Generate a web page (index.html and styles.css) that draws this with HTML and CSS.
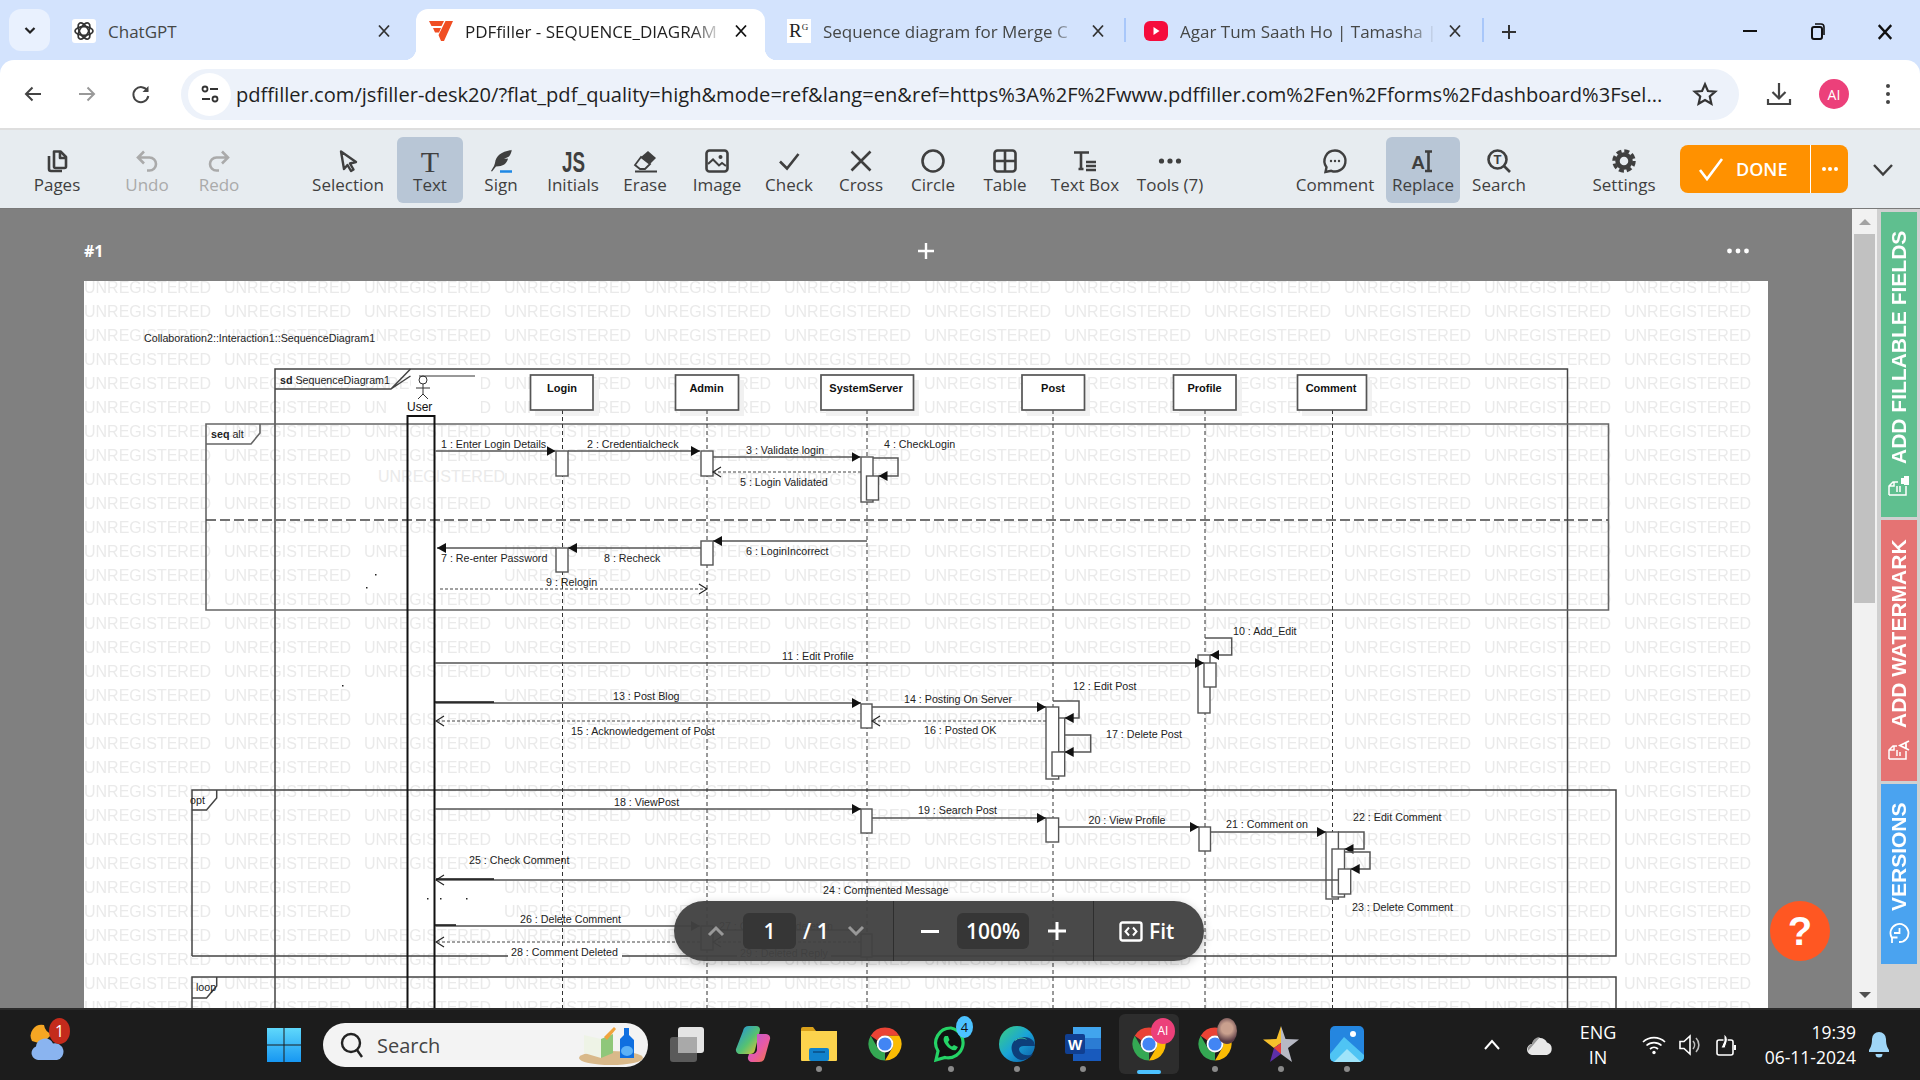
FILE: index.html
```html
<!DOCTYPE html>
<html lang="en">
<head>
    <meta charset="UTF-8">
    <meta name="viewport" content="width=device-width, initial-scale=1.0">
    <title>PDFfiller - SEQUENCE_DIAGRAM</title>
    <link rel="stylesheet" href="styles.css">
</head>
<body>

<svg class="defs" aria-hidden="true">
    <symbol id="chrome" viewBox="0 0 24 24">
        <path fill="#ea4335" d="M12 1a11 11 0 0 1 9.53 5.5H12a5.5 5.5 0 0 0-5 3.2L2.47 6.5A11 11 0 0 1 12 1z"/>
        <path fill="#fbbc04" d="M21.53 6.5A11 11 0 0 1 12 23l4.76-8.25A5.5 5.5 0 0 0 12 6.5z"/>
        <path fill="#34a853" d="M12 23A11 11 0 0 1 2.47 6.5l4.77 8.25a5.5 5.5 0 0 0 4.76 2.75z"/>
        <circle cx="12" cy="12" r="5.6" fill="#fff"/>
        <circle cx="12" cy="12" r="4.4" fill="#4285f4"/>
    </symbol>
    <symbol id="close" viewBox="0 0 16 16">
        <path d="M3 2.5l10 11M13 2.5l-10 11" fill="none" stroke="currentColor" stroke-width="1.8"/>
    </symbol>
</svg>

<div class="tabbar">
    <div class="tab-search">
        <svg width="14" height="14" viewBox="0 0 14 14"><path d="M2.5 5l4.5 4.5L11.5 5" fill="none" stroke="#222" stroke-width="2.2"/></svg>
    </div>
    <div class="tab tab-first">
        <svg class="favicon" viewBox="0 0 24 24"><rect width="24" height="24" rx="3" fill="#fff"/><g fill="none" stroke="#333" stroke-width="1.7"><ellipse cx="12" cy="12" rx="9" ry="4.4"/><ellipse cx="12" cy="12" rx="9" ry="4.4" transform="rotate(60 12 12)"/><ellipse cx="12" cy="12" rx="9" ry="4.4" transform="rotate(120 12 12)"/></g></svg>
        <span class="tab-title">ChatGPT</span>
        <svg class="tab-x"><use href="#close"/></svg>
    </div>
    <div class="tab tab-active">
        <svg class="favicon" viewBox="0 0 24 24"><path fill="#f04e23" d="M0 2h15l-2.5 5H2.5zM4 9h8l-2 4.5H6zM16.5 2H24l-9 20h-3l-2.5-6z"/></svg>
        <span class="tab-title tab-fade">PDFfiller - SEQUENCE_DIAGRAM</span>
        <svg class="tab-x"><use href="#close"/></svg>
    </div>
    <div class="tab tab-third">
        <span class="favicon favicon-r">R<sup>G</sup></span>
        <span class="tab-title tab-fade">Sequence diagram for Merge C</span>
        <svg class="tab-x"><use href="#close"/></svg>
    </div>
    <div class="tab tab-fourth">
        <svg class="favicon" viewBox="0 0 24 24"><rect y="2" width="24" height="20" rx="6" fill="#f50c3c"/><path d="M9.5 8l6 4-6 4z" fill="#fff"/></svg>
        <span class="tab-title tab-fade">Agar Tum Saath Ho | Tamasha |</span>
        <svg class="tab-x"><use href="#close"/></svg>
    </div>
    <svg class="tab-plus" width="18" height="18" viewBox="0 0 18 18"><path d="M9 2v14M2 9h14" stroke="#333" stroke-width="2"/></svg>
    <div class="window-btns">
        <svg width="18" height="18" viewBox="0 0 18 18"><path d="M2 9h14" stroke="#111" stroke-width="2"/></svg>
        <svg width="18" height="18" viewBox="0 0 18 18"><rect x="4" y="5" width="10" height="12" rx="2" fill="none" stroke="#111" stroke-width="2"/><path d="M7 2h6a3 3 0 0 1 3 3v8" fill="none" stroke="#111" stroke-width="1.6"/></svg>
        <svg width="20" height="20"><use href="#close" color="#111"/></svg>
    </div>
</div>

<div class="addressbar">
    <svg class="nav-icon" viewBox="0 0 24 24"><path d="M20 12H5M11.5 5.5L5 12l6.5 6.5" fill="none" stroke="#444" stroke-width="2"/></svg>
    <svg class="nav-icon" viewBox="0 0 24 24"><path d="M4 12h15M12.5 5.5L19 12l-6.5 6.5" fill="none" stroke="#999" stroke-width="2"/></svg>
    <svg class="nav-icon" viewBox="0 0 24 24"><path d="M18.5 9a7.5 7.5 0 1 0 .8 5" fill="none" stroke="#444" stroke-width="2"/><path d="M19.5 4v6h-6z" fill="#444"/></svg>
    <div class="omnibox">
        <span class="site-info">
            <svg width="20" height="22" viewBox="0 0 20 22"><g fill="none" stroke="#333" stroke-width="1.8"><circle cx="5" cy="6" r="2.5"/><path d="M10 6h8M2 16h8"/><circle cx="15" cy="16" r="2.5"/></g></svg>
        </span>
        <span class="url">pdffiller.com/jsfiller-desk20/?flat_pdf_quality=high&amp;mode=ref&amp;lang=en&amp;ref=https%3A%2F%2Fwww.pdffiller.com%2Fen%2Fforms%2Fdashboard%3Fsel...</span>
        <svg class="star" viewBox="0 0 24 24"><path d="M12 3l2.7 6.200 6.800.6-5.100 4.500 1.500 6.700L12 17.500 6.100 21l1.500-6.700L2.500 9.800l6.800-.6z" fill="none" stroke="#333" stroke-width="2"/></svg>
    </div>
    <svg class="download" viewBox="0 0 28 28"><path d="M14 3v15M7.5 12l6.500 6.500 6.500-6.500M3 19v5h22v-5" fill="none" stroke="#444" stroke-width="2.2"/></svg>
    <span class="avatar">AI</span>
    <svg class="kebab" width="6" height="24" viewBox="0 0 6 24"><circle cx="3" cy="4" r="2" fill="#444"/><circle cx="3" cy="12" r="2" fill="#444"/><circle cx="3" cy="20" r="2" fill="#444"/></svg>
</div>

<div class="toolbar">
    <div class="tool tool-first">
        <svg class="tool-icon" viewBox="0 0 24 24"><g fill="none" stroke="#3f3f3f" stroke-width="2.6" stroke-linejoin="round"><path d="M9 2.5h6.500L21 8v9.500a1.500 1.500 0 0 1-1.500 1.500H10.500A1.500 1.500 0 0 1 9 17.500z"/><path d="M15 2.500V9h6"/><path d="M4 7v13a2 2 0 0 0 2 2h11"/></g></svg>
        <span>Pages</span>
    </div>
    <div class="tool tool-off tool-undo">
        <svg class="tool-icon" viewBox="0 0 24 24"><path d="M9 2.500L3 8.500l6 6M3 8.500h11.500a6.500 6.500 0 0 1 0 13H12" fill="none" stroke="#aaa" stroke-width="2.6"/></svg>
        <span>Undo</span>
    </div>
    <div class="tool tool-off">
        <svg class="tool-icon" viewBox="0 0 24 24"><path d="M15 2.500l6 6-6 6M21 8.500H9.500a6.500 6.500 0 0 0 0 13H12" fill="none" stroke="#aaa" stroke-width="2.6"/></svg>
        <span>Redo</span>
    </div>
    <div class="tool tool-selection">
        <svg class="tool-icon" viewBox="0 0 24 24"><path d="M5 2.500l15 10.500-6 1.500 3.500 6-2.500 1.500-3.500-6L8 20z" fill="none" stroke="#3f3f3f" stroke-width="2.4" stroke-linejoin="round"/></svg>
        <span>Selection</span>
    </div>
    <div class="tool tool-on tool-text">
        <svg class="tool-icon" viewBox="0 0 24 24"><text x="12" y="23" class="glyph-serif">T</text></svg>
        <span>Text</span>
    </div>
    <div class="tool tool-sign">
        <svg class="tool-icon" viewBox="0 0 24 24"><path d="M23 1C14 2 7 6 6 14l-1 3-3 5 1 .5 4-5c7 0 11-3 12-8l-4 .5 5-2.500c1.500-2 2.500-4.500 3-7z" fill="#3f3f3f"/><path d="M11 22.500h12" stroke="#1e88e5" stroke-width="2.5"/></svg>
        <span>Sign</span>
    </div>
    <div class="tool">
        <svg class="tool-icon" viewBox="0 0 24 24"><text x="1" y="23" class="glyph-cond" textLength="23" lengthAdjust="spacingAndGlyphs">JS</text></svg>
        <span>Initials</span>
    </div>
    <div class="tool">
        <svg class="tool-icon" viewBox="0 0 24 24"><path d="M15 2l8 7-6 6-9-7z" fill="#3f3f3f"/><path d="M8 8l9 7-5 5H7l-5-4zM2 22.500h22" fill="none" stroke="#3f3f3f" stroke-width="1.8"/></svg>
        <span>Erase</span>
    </div>
    <div class="tool">
        <svg class="tool-icon" viewBox="0 0 24 24"><rect x="1.500" y="1.500" width="21" height="21" rx="3" fill="none" stroke="#3f3f3f" stroke-width="2.6"/><circle cx="15.500" cy="8" r="2" fill="#3f3f3f"/><path d="M3 15l5-4.500 6 6 3-2.500 4 3" fill="none" stroke="#3f3f3f" stroke-width="2"/></svg>
        <span>Image</span>
    </div>
    <div class="tool">
        <svg class="tool-icon" viewBox="0 0 24 24"><path d="M3 12.500l7 7L21.500 5" fill="none" stroke="#3f3f3f" stroke-width="2.6"/></svg>
        <span>Check</span>
    </div>
    <div class="tool">
        <svg class="tool-icon" viewBox="0 0 24 24"><path d="M2.500 2.500l19 19M21.500 2.500l-19 19" fill="none" stroke="#3f3f3f" stroke-width="2.6"/></svg>
        <span>Cross</span>
    </div>
    <div class="tool">
        <svg class="tool-icon" viewBox="0 0 24 24"><circle cx="12" cy="12" r="10.500" fill="none" stroke="#3f3f3f" stroke-width="2.6"/></svg>
        <span>Circle</span>
    </div>
    <div class="tool">
        <svg class="tool-icon" viewBox="0 0 24 24"><rect x="1.500" y="1.500" width="21" height="21" rx="3" fill="none" stroke="#3f3f3f" stroke-width="2.6"/><path d="M12 2v20M2 12h20" stroke="#3f3f3f" stroke-width="2.6"/></svg>
        <span>Table</span>
    </div>
    <div class="tool tool-textbox">
        <svg class="tool-icon" viewBox="0 0 24 24"><path d="M1 3.500h15M8 3.500V19M5.500 20h5M13 13h10M13 17h10M13 21h10" fill="none" stroke="#3f3f3f" stroke-width="2.6"/></svg>
        <span>Text Box</span>
    </div>
    <div class="tool tool-more">
        <svg class="tool-icon" viewBox="0 0 24 24"><circle cx="3.500" cy="12" r="2.600" fill="#3f3f3f"/><circle cx="12" cy="12" r="2.600" fill="#3f3f3f"/><circle cx="20.500" cy="12" r="2.600" fill="#3f3f3f"/></svg>
        <span>Tools (7)</span>
    </div>
    <div class="tool tool-comment">
        <svg class="tool-icon" viewBox="0 0 24 24"><path d="M12 1.500a10.500 10.500 0 1 1-3.800 20.300L2.500 23l1-4.800A10.500 10.500 0 0 1 12 1.500z" fill="none" stroke="#3f3f3f" stroke-width="2.4"/><circle cx="8" cy="12" r="1.200" fill="#3f3f3f"/><circle cx="12" cy="12" r="1.200" fill="#3f3f3f"/><circle cx="16" cy="12" r="1.200" fill="#3f3f3f"/></svg>
        <span>Comment</span>
    </div>
    <div class="tool tool-on tool-replace">
        <svg class="tool-icon" viewBox="0 0 24 24"><text x="7" y="20" class="glyph-bold">A</text><path d="M14 2.500h7M14 22h7M17.500 3v18" fill="none" stroke="#3f3f3f" stroke-width="2.6"/></svg>
        <span>Replace</span>
    </div>
    <div class="tool tool-search">
        <svg class="tool-icon" viewBox="0 0 24 24"><circle cx="10.500" cy="10.500" r="9" fill="none" stroke="#3f3f3f" stroke-width="2.6"/><path d="M17 17l6 6" stroke="#3f3f3f" stroke-width="2.6"/><text x="10.500" y="15" class="glyph-small">T</text></svg>
        <span>Search</span>
    </div>
    <div class="tool tool-settings">
        <svg class="tool-icon" viewBox="0 0 24 24"><circle cx="12" cy="12" r="6.500" fill="none" stroke="#3f3f3f" stroke-width="4.5"/><circle cx="12" cy="12" r="10" fill="none" stroke="#3f3f3f" stroke-width="3.5" stroke-dasharray="5 2.850"/></svg>
        <span>Settings</span>
    </div>
    <div class="done">
        <div class="done-main">
            <svg width="26" height="26" viewBox="0 0 26 26"><path d="M2 14l7 9L24 3" fill="none" stroke="#fff" stroke-width="2.6"/></svg>
            <span>DONE</span>
        </div>
        <div class="done-more">
            <svg width="20" height="6" viewBox="0 0 20 6"><circle cx="4" cy="3" r="2" fill="#fff"/><circle cx="10" cy="3" r="2" fill="#fff"/><circle cx="16" cy="3" r="2" fill="#fff"/></svg>
        </div>
    </div>
    <svg class="toolbar-chevron" width="22" height="14" viewBox="0 0 22 14"><path d="M2 2l9 9.500L20 2" fill="none" stroke="#3f3f3f" stroke-width="2.4"/></svg>
</div>

<div class="main">
    <div class="workspace">
        <div class="page-head">
            <span class="page-num">#1</span>
            <svg class="page-add" width="18" height="18" viewBox="0 0 18 18"><path d="M9 1v16M1 9h16" stroke="#fff" stroke-width="2.4"/></svg>
            <svg width="24" height="6" viewBox="0 0 24 6"><circle cx="3.500" cy="3" r="2.400" fill="#fff"/><circle cx="12" cy="3" r="2.400" fill="#fff"/><circle cx="20.500" cy="3" r="2.400" fill="#fff"/></svg>
        </div>

        <svg class="page" viewBox="84 281 1684 727">
            <defs>
                <pattern id="wm" patternUnits="userSpaceOnUse" x="84" y="281" width="140" height="24">
                    <text x="0" y="12" class="wm-text">UNREGISTERED</text>
                </pattern>
                <marker id="solid" markerUnits="userSpaceOnUse" markerWidth="9" markerHeight="10" refX="9" refY="5" orient="auto">
                    <path d="M0 0L9 5 0 10z" fill="#111"/>
                </marker>
                <marker id="open" markerUnits="userSpaceOnUse" markerWidth="10" markerHeight="12" refX="9" refY="6" orient="auto">
                    <path d="M1 1L9 6 1 11" fill="none" stroke="#222" stroke-width="1.2"/>
                </marker>
            </defs>

            <rect x="84" y="281" width="1684" height="727" fill="#fff"/>
            <rect x="84" y="281" width="1680" height="727" fill="url(#wm)"/>

            <!-- spots where the diagram blanked the watermark -->
            <g fill="#fff">
                <path d="M388 395h23v-19h70v43h-93z"/>
                <rect x="360" y="467" width="140" height="22"/>
                <rect x="410" y="540" width="85" height="22"/>
                <rect x="360" y="564" width="140" height="22"/>
                <rect x="365" y="684" width="135" height="22"/>
                <rect x="365" y="876" width="135" height="46"/>
            </g>
            <text x="378" y="482" class="wm-text">UNREGISTERED</text>
            <g class="box-shadow">
                <rect x="535" y="380" width="64" height="36"/>
                <rect x="680" y="380" width="64" height="36"/>
                <rect x="826" y="380" width="93" height="36"/>
                <rect x="1027" y="380" width="63" height="36"/>
                <rect x="1179" y="380" width="63" height="36"/>
                <rect x="1302" y="380" width="70" height="36"/>
            </g>

            <g class="frame-dark">
                <path d="M275 1008V369H1567.500V1008"/>
                <path d="M275 389H391L410.500 369M391 389l19.500-13"/>
                <path d="M192 1008V977H1616V1008M192 956V790H1616V956H192"/>
                <path d="M192 810H206.500L216.700 798V790M192 998H206.500L216.700 986V977"/>
            </g>
            <g class="frame-grey">
                <path d="M206 424H1608.500V610H206z"/>
                <path d="M206 444H251L260 433V424"/>
            </g>
            <path class="divider" d="M206 520H1608"/>

            <g class="lifeline">
                <path d="M562.500 410V1008M707 410V1008M867 410V1008M1053 410V1008M1205 410V1008M1332.500 410V1008"/>
            </g>

            <!-- lifeline heads -->
            <g class="box">
                <rect x="530.500" y="375" width="62.500" height="35"/>
                <rect x="675.500" y="375" width="63" height="35"/>
                <rect x="821" y="375" width="92.500" height="35"/>
                <rect x="1022" y="375" width="62.500" height="35"/>
                <rect x="1173.500" y="375" width="62.500" height="35"/>
                <rect x="1297.500" y="375" width="69" height="35"/>
            </g>
            <g class="box-label">
                <text x="562" y="392">Login</text>
                <text x="706.500" y="392">Admin</text>
                <text x="866" y="392">SystemServer</text>
                <text x="1053" y="392">Post</text>
                <text x="1204.500" y="392">Profile</text>
                <text x="1331" y="392">Comment</text>
            </g>

            <!-- actor -->
            <g class="actor">
                <path d="M419 376H475"/>
                <circle cx="423" cy="380" r="4"/>
                <path d="M423 384V394M416 388H430M423 394L418 399M423 394L428 399"/>
            </g>
            <text x="407" y="411" class="actor-label">User</text>
            <path class="user-bar" d="M407.500 1008V416H434.500V1008"/>

            <!-- frame captions -->
            <text x="144" y="342" class="msg">Collaboration2::Interaction1::SequenceDiagram1</text>
            <text x="280" y="384" class="msg"><tspan class="msg-b">sd</tspan> SequenceDiagram1</text>
            <text x="211" y="438" class="msg"><tspan class="msg-b">seq</tspan> alt</text>
            <text x="190" y="804" class="msg">opt</text>
            <text x="196" y="991" class="msg">loop</text>

            <!-- activation bars -->
            <g class="act">
                <rect x="556" y="451" width="12" height="25"/>
                <rect x="701" y="451" width="12" height="25"/>
                <rect x="861" y="457" width="12" height="45"/>
                <rect x="866.500" y="476" width="12" height="24"/>
                <rect x="701" y="541" width="12" height="24"/>
                <rect x="556" y="548" width="12" height="24"/>
                <rect x="1198" y="655" width="12" height="58"/>
                <rect x="1204" y="663" width="12" height="24"/>
                <rect x="861" y="704" width="11" height="24"/>
                <rect x="1046" y="707" width="12.700" height="72"/>
                <rect x="1058.700" y="718" width="6" height="34"/>
                <rect x="1052" y="752" width="12.700" height="24"/>
                <rect x="861" y="809" width="11" height="24"/>
                <rect x="1046" y="818" width="12.600" height="24"/>
                <rect x="1199" y="827" width="11.500" height="24"/>
                <rect x="1326" y="832" width="12.400" height="67"/>
                <rect x="1332" y="849" width="12.500" height="48"/>
                <rect x="1338.400" y="869" width="12.300" height="25"/>
                <rect x="701" y="926" width="12" height="24"/>
                <rect x="861" y="934" width="11" height="23"/>
            </g>

            <!-- messages -->
            <g class="line">
                <path marker-end="url(#solid)" d="M435.500 451H555.500"/>
                <path marker-end="url(#solid)" d="M568 451H700"/>
                <path marker-end="url(#solid)" d="M713 457H860.500"/>
                <path marker-end="url(#solid)" d="M873 458H898V476H878.500"/>
                <path marker-end="url(#solid)" d="M867 541H713"/>
                <path marker-end="url(#solid)" d="M701 548H568"/>
                <path marker-end="url(#solid)" d="M556 548H437"/>
                <path marker-end="url(#solid)" d="M1205 638H1231.700V655H1210"/>
                <path marker-end="url(#solid)" d="M435 663H1204"/>
                <path marker-end="url(#solid)" d="M435 703H861"/>
                <path marker-end="url(#solid)" d="M872 707H1046"/>
                <path marker-end="url(#solid)" d="M1053 701H1079V718H1064.700"/>
                <path marker-end="url(#solid)" d="M1064.700 735H1090.700V752H1064.700"/>
                <path marker-end="url(#solid)" d="M435 809H861"/>
                <path marker-end="url(#solid)" d="M872 818H1046"/>
                <path marker-end="url(#solid)" d="M1058.600 827H1199"/>
                <path marker-end="url(#solid)" d="M1210.500 832H1326"/>
                <path marker-end="url(#solid)" d="M1338 832H1364V849H1344.500"/>
                <path marker-end="url(#solid)" d="M1344.500 852H1370V869H1350.700"/>
                <path marker-end="url(#open)" d="M1338 880H436"/>
                <path marker-end="url(#solid)" d="M435 926H700"/>
                <path d="M713 930H861"/>
                <path class="line-heavy" d="M435 702H494M436 879H494M435 925H456"/>
            </g>
            <g class="line line-dash">
                <path marker-end="url(#open)" d="M861 472H713"/>
                <path marker-end="url(#open)" d="M440 589H707"/>
                <path marker-end="url(#open)" d="M860 721H436"/>
                <path marker-end="url(#open)" d="M1046 721H872"/>
                <path marker-end="url(#open)" d="M700 942H436"/>
                <path marker-end="url(#open)" d="M861 942H713"/>
            </g>

            <g class="dots">
                <rect x="375" y="574" width="1.500" height="1.500"/>
                <rect x="366" y="587" width="1.500" height="1.500"/>
                <rect x="342" y="685" width="1.500" height="1.500"/>
                <rect x="427" y="898" width="1.500" height="1.500"/>
                <rect x="440" y="898" width="1.500" height="1.500"/>
                <rect x="466" y="898" width="1.500" height="1.500"/>
            </g>

            <g fill="#fff">
                <rect x="508" y="946" width="114" height="12"/>
                <rect x="737" y="948" width="94" height="11"/>
            </g>
            <g class="msg">
                <text x="441" y="448">1 : Enter Login Details</text>
                <text x="587" y="448">2 : Credentialcheck</text>
                <text x="746" y="453.500">3 : Validate login</text>
                <text x="884" y="448">4 : CheckLogin</text>
                <text x="740" y="486">5 : Login Validated</text>
                <text x="746" y="555">6 : LoginIncorrect</text>
                <text x="441" y="562">7 : Re-enter Password</text>
                <text x="604" y="562">8 : Recheck</text>
                <text x="546" y="586">9 : Relogin</text>
                <text x="1233" y="635">10 : Add_Edit</text>
                <text x="782" y="659.500">11 : Edit Profile</text>
                <text x="1073" y="689.500">12 : Edit Post</text>
                <text x="613" y="700">13 : Post Blog</text>
                <text x="904" y="703">14 : Posting On Server</text>
                <text x="571" y="734.500">15 : Acknowledgement of Post</text>
                <text x="924" y="734">16 : Posted OK</text>
                <text x="1106" y="738">17 : Delete Post</text>
                <text x="614" y="806">18 : ViewPost</text>
                <text x="918" y="813.500">19 : Search Post</text>
                <text x="1088.500" y="824">20 : View Profile</text>
                <text x="1226" y="828">21 : Comment on</text>
                <text x="1353" y="821">22 : Edit Comment</text>
                <text x="1352" y="911">23 : Delete Comment</text>
                <text x="823" y="894">24 : Commented Message</text>
                <text x="469" y="864">25 : Check Comment</text>
                <text x="520" y="922.500">26 : Delete Comment</text>
                <text x="719" y="930">27 : Confirm for deletion</text>
                <text x="511" y="956">28 : Comment Deleted</text>
                <text x="740" y="957">29 : Deleted Reply</text>
            </g>
        </svg>

        <div class="pager">
            <svg class="pager-chevron" viewBox="0 0 18 12"><path d="M2 10l7-7 7 7" fill="none" stroke="#999" stroke-width="3"/></svg>
            <span class="pager-box pager-page">1</span>
            <span class="pager-total">/ 1</span>
            <svg class="pager-chevron pager-down" viewBox="0 0 18 12"><path d="M2 2l7 7 7-7" fill="none" stroke="#999" stroke-width="3"/></svg>
            <svg class="pager-minus" width="18" height="3" viewBox="0 0 18 3"><path d="M0 1.500h18" stroke="#fff" stroke-width="3"/></svg>
            <span class="pager-box pager-zoom">100%</span>
            <svg class="pager-plus" width="18" height="18" viewBox="0 0 18 18"><path d="M9 0v18M0 9h18" stroke="#fff" stroke-width="3"/></svg>
            <span class="pager-fit">
                <svg width="24" height="21" viewBox="0 0 24 21"><rect x="1.500" y="1.500" width="21" height="18" rx="2" fill="none" stroke="#fff" stroke-width="2.4"/><path d="M10 6.500l-3.500 4 3.500 4M14 6.500l3.500 4-3.500 4" fill="none" stroke="#fff" stroke-width="2"/></svg>
                Fit
            </span>
        </div>
        <div class="help">?</div>
    </div>

    <div class="scrollbar">
        <span class="scroll-up"></span>
        <span class="scroll-thumb"></span>
        <span class="scroll-down"></span>
    </div>

    <div class="side-tabs">
        <div class="side-tab side-green">
            <svg width="20" height="22" viewBox="0 0 20 22"><path d="M1 1h9l4 4v5M10 1v5h4M1 1v17h9M4 9h6M4 12h6" fill="none" stroke="#fff" stroke-width="1.5"/><path d="M12 13h6v3h2v5h-9v-5h1z" fill="#fff"/></svg>
            <span>ADD FILLABLE FIELDS</span>
        </div>
        <div class="side-tab side-red">
            <svg width="20" height="22" viewBox="0 0 20 22"><path d="M1 1h9l4 4v4M10 1v5h4M1 1v17h8M4 9h6M4 12h4" fill="none" stroke="#fff" stroke-width="1.5"/><path d="M10 21l4.500-9 4.500 9M12 18h5" fill="none" stroke="#fff" stroke-width="1.8"/></svg>
            <span>ADD WATERMARK</span>
        </div>
        <div class="side-tab side-blue">
            <svg width="22" height="22" viewBox="0 0 22 22"><path d="M6 4a9 9 0 1 1-4 7M1 4h5.500v5.500M11 6v5.500h5" fill="none" stroke="#fff" stroke-width="1.8"/></svg>
            <span>VERSIONS</span>
        </div>
    </div>
</div>

<div class="taskbar">
    <div class="weather">
        <svg width="40" height="42" viewBox="0 0 40 42"><path d="M14 7a11 11 0 0 0-12 16l10 3 10-10A11 11 0 0 1 14 7z" fill="#f5a623"/><path d="M9 42a7 7 0 0 1-3-13.500 9 9 0 0 1 17-3 8 8 0 0 1 4 16.500z" fill="#8ab4f0"/></svg>
        <span class="badge-red">1</span>
    </div>
    <svg class="winlogo" width="36" height="36" viewBox="0 0 36 36">
        <defs><linearGradient id="win" x1="0" y1="0" x2="0" y2="1"><stop offset="0" stop-color="#5fd8fb"/><stop offset="1" stop-color="#1797f2"/></linearGradient></defs>
        <path fill="url(#win)" d="M1 1h16.500v16.500H1zM18.500 1H35v16.500H18.500zM1 18.500h16.500V35H1zM18.500 18.500H35V35H18.500z"/>
    </svg>
    <div class="search">
        <svg width="24" height="26" viewBox="0 0 24 26"><circle cx="11" cy="11" r="9" fill="none" stroke="#222" stroke-width="2.4"/><path d="M17 18l5 7" stroke="#222" stroke-width="2.4"/></svg>
        <span>Search</span>
        <svg class="search-art" width="66" height="40" viewBox="0 0 66 40"><ellipse cx="33" cy="33" rx="32" ry="7" fill="#d9b98a"/><path d="M6 10l17 4v19l-17-5z" fill="#eef3e6"/><path d="M23 14l12-5v19l-12 5z" fill="#8fc77a"/><path d="M26 12l10-10 2 2-9 11z" fill="#f0a33c"/><path d="M42 33V14l4-4V3h5v7l5 5v18z" fill="#0f6fe0"/><ellipse cx="49" cy="26" rx="6" ry="5" fill="#5db2f7"/></svg>
    </div>
    <div class="task-icons">
        <div class="task-icon">
            <svg width="36" height="36" viewBox="0 0 36 36"><rect x="1" y="11" width="27" height="25" rx="3" fill="#5a5a5a"/><rect x="9" y="1" width="26" height="26" rx="3" fill="#e4e4e4"/><rect x="9" y="11" width="19" height="16" fill="#a9a9a9"/></svg>
        </div>
        <div class="task-icon">
            <svg width="36" height="38" viewBox="0 0 36 38"><defs><linearGradient id="cop1" x1="0" y1="0" x2="1" y2="1"><stop offset="0" stop-color="#1b8ee8"/><stop offset=".55" stop-color="#56c271"/><stop offset="1" stop-color="#f7c22f"/></linearGradient><linearGradient id="cop2" x1="0" y1="0" x2="1" y2="1"><stop offset="0" stop-color="#b05ce0"/><stop offset=".55" stop-color="#e85aa5"/><stop offset="1" stop-color="#f27b3a"/></linearGradient></defs><path fill="url(#cop1)" d="M14 1h7a4 4 0 0 1 4 4l-5 20a5 5 0 0 1-5 4H5a4 4 0 0 1-4-5L8 6a6 6 0 0 1 6-5z"/><path fill="url(#cop2)" d="M22 9h9a4 4 0 0 1 4 5l-5 18a6 6 0 0 1-6 5h-7a4 4 0 0 1-4-5l1-3h3a5 5 0 0 0 5-4z"/></svg>
        </div>
        <div class="task-icon task-open">
            <svg width="36" height="36" viewBox="0 0 36 36"><path d="M0 3a2 2 0 0 1 2-2h10l3 4h-15z" fill="#d9a01a"/><path d="M0 5h36v29a1 1 0 0 1-1 1H1a1 1 0 0 1-1-1z" fill="#fcd34d"/><rect x="8" y="22" width="20" height="13" rx="2" fill="#1182cc"/><rect x="12" y="25" width="12" height="2" fill="#0b5a96"/></svg>
        </div>
        <div class="task-icon">
            <svg width="36" height="36"><use href="#chrome"/></svg>
        </div>
        <div class="task-icon task-open">
            <svg width="36" height="38" viewBox="0 0 36 38"><path d="M18 3a15 15 0 0 0-13 23L3 35l9-2.500A15 15 0 1 0 18 3z" fill="#111" stroke="#25d366" stroke-width="3.2"/><path d="M12 11c-2 2-2 5 1 9s7 6 10 5l2-3-4-2-2 1.500c-2-1-3-2.500-4-4.500l1.500-2L15 11z" fill="#25d366"/></svg>
            <span class="badge-blue">4</span>
        </div>
        <div class="task-icon task-open">
            <svg width="36" height="36" viewBox="0 0 36 36"><defs><linearGradient id="edge" x1="0" y1="0" x2="1" y2="1"><stop offset="0" stop-color="#3bd07f"/><stop offset=".5" stop-color="#1aa4d8"/><stop offset="1" stop-color="#0c59a4"/></linearGradient></defs><circle cx="18" cy="18" r="18" fill="url(#edge)"/><path d="M36 20c0-6-6-9-11-9-9 0-14 7-12 14 1 5 5 9 11 9 5-1 8-3 10-6-4 2-10 2-13-2-2-3-1-6 4-6z" fill="#0d3f7a"/><path d="M16 15c3-3 8-3 12-1-1-2-5-3-8-2s-4 2-4 3z" fill="#49d9a0"/></svg>
        </div>
        <div class="task-icon task-open">
            <svg width="36" height="36" viewBox="0 0 36 36"><path d="M8 1h26a2 2 0 0 1 2 2v30a2 2 0 0 1-2 2H8z" fill="#2b7cd3"/><rect x="8" y="1" width="28" height="11" fill="#41a5ee"/><rect x="8" y="23" width="28" height="12" fill="#185abd"/><rect y="8" width="20" height="20" rx="2" fill="#103f91"/><text x="10" y="24" class="word-w">W</text></svg>
        </div>
        <div class="task-icon task-active">
            <svg width="36" height="36"><use href="#chrome"/></svg>
            <span class="badge-pink">AI</span>
        </div>
        <div class="task-icon task-open">
            <svg width="36" height="36"><use href="#chrome"/></svg>
            <span class="badge-photo"></span>
        </div>
        <div class="task-icon task-open">
            <svg width="36" height="36" viewBox="0 0 36 36"><path d="M18 0l4.500 13L36 13.500 25 22l4 14-11-8z" fill="#b7b9c4"/><path d="M18 0l-4.500 13L0 13.500 11 22l7-5z" fill="#f6c02c"/><path d="M11 22L7 36l11-8V17z" fill="#5c2fa8"/><path d="M18 17l-7 5 7 6z" fill="#e8413a"/></svg>
        </div>
        <div class="task-icon task-open">
            <svg width="34" height="36" viewBox="0 0 34 36"><rect width="34" height="36" rx="5" fill="#2486e0"/><circle cx="23" cy="8" r="3" fill="#fff"/><path d="M0 28l14-17 20 18v2a5 5 0 0 1-5 5H5a5 5 0 0 1-5-5z" fill="#4fc4f4"/><path d="M4 36l13-13 14 13z" fill="#9fe4fa"/></svg>
        </div>
    </div>
    <div class="tray">
        <div class="tray-cell tray-chevron">
            <svg width="18" height="12" viewBox="0 0 18 12"><path d="M2 10l7-8 7 8" fill="none" stroke="#fff" stroke-width="2"/></svg>
        </div>
        <div class="tray-cell tray-cloud">
            <svg width="26" height="20" viewBox="0 0 26 20"><path d="M6 20a5.500 5.500 0 0 1-1-11A8 8 0 0 1 20 7.500 6.500 6.500 0 0 1 20 20z" fill="#e8e8e8"/><path d="M1 16a5.500 5.500 0 0 1 4-7 8 8 0 0 1 8-7z" fill="#9a9a9a"/></svg>
        </div>
        <div class="tray-cell tray-lang">ENG<br>IN</div>
        <div class="tray-cell tray-sys">
            <svg width="24" height="20" viewBox="0 0 24 20"><g fill="none" stroke="#fff" stroke-width="1.7"><path d="M1 7a16 16 0 0 1 22 0M4.500 10.500a11 11 0 0 1 15 0M8 14a6 6 0 0 1 8 0"/></g><circle cx="12" cy="17.500" r="1.700" fill="#fff"/></svg>
        </div>
        <div class="tray-cell tray-sys">
            <svg width="24" height="22" viewBox="0 0 24 22"><path d="M2 7.500h4L12 2v18l-6-5.500H2z" fill="none" stroke="#fff" stroke-width="1.6"/><path d="M15 7a6 6 0 0 1 0 8M18 4a10 10 0 0 1 0 14" fill="none" stroke="#bbb" stroke-width="1.6"/></svg>
        </div>
        <div class="tray-cell tray-sys">
            <svg width="24" height="24" viewBox="0 0 24 24"><rect x="3" y="7" width="16" height="15" rx="2" fill="none" stroke="#fff" stroke-width="1.6"/><path d="M21 12v5" stroke="#fff" stroke-width="2"/><path d="M10 1c3 2 4 5 3 8l-2 6H7l3-7z" fill="#fff" stroke="#1c1c1c"/></svg>
        </div>
        <div class="clock"><span>19:39</span><span>06-11-2024</span></div>
        <svg class="bell" width="22" height="28" viewBox="0 0 22 28"><path d="M11 1a7 7 0 0 1 7 7c0 7 2 9 3 11v2H1v-2c1-2 3-4 3-11a7 7 0 0 1 7-7z" fill="#9fd6f7"/><path d="M7.500 23h7a3.500 3.500 0 0 1-7 0z" fill="#9fd6f7"/></svg>
    </div>
</div>

</body>
</html>
```
FILE: styles.css
```css
* {
    box-sizing: border-box;
}
html, body {
    margin: 0;
    padding: 0;
    width: 1920px;
    height: 1080px;
    overflow: hidden;
}
body {
    display: flex;
    flex-direction: column;
    font-family: "Open Sans", "Liberation Sans", sans-serif;
    background-color: #d3e3fd;
}
.defs {
    position: absolute;
    width: 0;
    height: 0;
}

/* browser tabs */
.tabbar {
    display: flex;
    height: 60px;
    padding: 9px 0 0 9px;
    background-color: #d3e3fd;
    flex-shrink: 0;
}
.tab-search {
    display: flex;
    align-items: center;
    justify-content: center;
    width: 41px;
    height: 42px;
    border-radius: 12px;
    background-color: #e9f1fe;
}
.tab {
    position: relative;
    display: flex;
    align-items: center;
    height: 51px;
    padding-bottom: 7px;
    color: #454746;
    font-size: 17px;
}
.tab-first {
    width: 356px;
    margin-left: 10px;
    padding-left: 12px;
    padding-right: 24px;
}
.tab-active {
    width: 349px;
    padding-left: 13px;
    padding-right: 16px;
    background-color: #fff;
    border-radius: 12px 12px 0 0;
    color: #1f1f1f;
}
.tab-active::before,
.tab-active::after {
    content: "";
    position: absolute;
    bottom: 0;
    width: 12px;
    height: 12px;
}
.tab-active::before {
    left: -12px;
    background: radial-gradient(circle at 0 0, transparent 12px, #fff 12.5px);
}
.tab-active::after {
    right: -12px;
    background: radial-gradient(circle at 100% 0, transparent 12px, #fff 12.5px);
}
.tab-third {
    width: 351px;
    margin-left: 10px;
    padding-left: 12px;
    padding-right: 20px;
}
.tab-third::after,
.tab-fourth::after {
    content: "";
    position: absolute;
    right: 0;
    top: 9px;
    height: 24px;
    width: 2px;
    background-color: #a8c7fa;
}
.tab-fourth {
    width: 358px;
    padding-left: 18px;
    padding-right: 21px;
}
.favicon {
    width: 24px;
    height: 24px;
    flex-shrink: 0;
}
.favicon-r {
    display: block;
    background-color: #fff;
    color: #222;
    font-family: "Liberation Serif", serif;
    font-size: 19px;
    line-height: 24px;
    padding-left: 2px;
}
.favicon-r sup {
    font-size: 9px;
    line-height: 0;
}
.tab-title {
    flex: 1;
    min-width: 0;
    margin-left: 12px;
    white-space: nowrap;
}
.tab-fade {
    -webkit-mask-image: linear-gradient(to right, #000 88%, transparent 100%);
    mask-image: linear-gradient(to right, #000 88%, transparent 100%);
}
.tab-x {
    width: 16px;
    height: 16px;
    margin-left: 10px;
    flex-shrink: 0;
    color: #333;
}
.tab-active .tab-x {
    color: #111;
}
.tab-plus {
    margin: 14px 0 0 16px;
}
.window-btns {
    display: flex;
    margin-left: auto;
    margin-right: 25px;
    margin-top: 13px;
    gap: 49px;
}

/* address row */
.addressbar {
    display: flex;
    align-items: center;
    height: 68px;
    flex-shrink: 0;
    background-color: #fff;
    border-radius: 14px 14px 0 0;
    padding-left: 21px;
}
.nav-icon {
    width: 24px;
    height: 24px;
    margin-right: 30px;
}
.omnibox {
    display: flex;
    align-items: center;
    width: 1558px;
    height: 51px;
    margin-left: -2px;
    padding-left: 7px;
    border-radius: 26px;
    background-color: #edf2fa;
}
.site-info {
    display: flex;
    align-items: center;
    justify-content: center;
    width: 43px;
    height: 43px;
    flex-shrink: 0;
    border-radius: 50%;
    background-color: #fff;
}
.url {
    margin-left: 5px;
    width: 1430px;
    font-size: 20.1px;
    color: #1f1f1f;
    white-space: nowrap;
}
.star {
    width: 26px;
    height: 26px;
    margin-left: 26px;
}
.download {
    width: 28px;
    height: 28px;
    margin-left: 26px;
}
.avatar {
    display: flex;
    align-items: center;
    justify-content: center;
    width: 30px;
    height: 30px;
    margin-left: 26px;
    border-radius: 50%;
    background-color: #ec407a;
    color: #fff;
    font-size: 14px;
}
.kebab {
    margin-left: 36px;
}

/* editor toolbar */
.toolbar {
    display: flex;
    align-items: center;
    height: 81px;
    flex-shrink: 0;
    padding: 2px 0 0 21px;
    background-color: #e7ecf0;
    border-top: 2px solid #dedede;
    border-bottom: 1px solid #7a7a7a;
}
.tool {
    display: flex;
    flex-direction: column;
    align-items: center;
    width: 72px;
    height: 66px;
    padding-top: 10px;
    flex-shrink: 0;
    border-radius: 6px;
    color: #3f3f3f;
    font-size: 17px;
    font-weight: 500;
    line-height: 18px;
    white-space: nowrap;
}
.tool-icon {
    width: 24px;
    height: 24px;
    margin: 2px 0 3px;
    overflow: visible;
}
.tool-off {
    color: #aaa;
}
.tool-on {
    background-color: #b8c6d6;
}
.tool-undo {
    margin-left: 18px;
}
.tool-selection {
    margin-left: 57px;
}
.tool-text {
    width: 66px;
    margin-left: 13px;
}
.tool-sign {
    margin-left: 2px;
}
.tool-textbox {
    width: 88px;
}
.tool-more {
    width: 82px;
}
.tool-comment {
    width: 90px;
    margin-left: 79px;
}
.tool-replace {
    width: 74px;
    margin-left: 6px;
}
.tool-search {
    margin-left: 3px;
}
.tool-settings {
    margin-left: 53px;
}
.glyph-serif {
    font: 30px "Liberation Serif", serif;
    text-anchor: middle;
    fill: #3f3f3f;
}
.glyph-cond {
    font: bold 29px "Liberation Sans", sans-serif;
    fill: #3f3f3f;
}
.glyph-bold {
    font: bold 19px "Liberation Sans", sans-serif;
    text-anchor: middle;
    fill: #3f3f3f;
}
.glyph-small {
    font: bold 13px "Liberation Sans", sans-serif;
    text-anchor: middle;
    fill: #3f3f3f;
}
.done {
    display: flex;
    width: 168px;
    height: 48px;
    margin-left: 20px;
    margin-bottom: 2px;
    border-radius: 8px;
    overflow: hidden;
    background-color: #ff9100;
    color: #fff;
    font-size: 18px;
    font-weight: 600;
}
.done-main {
    display: flex;
    align-items: center;
    gap: 12px;
    width: 131px;
    padding-left: 18px;
    border-right: 1px solid #fff;
}
.done-more {
    display: flex;
    align-items: center;
    justify-content: center;
    flex: 1;
}
.toolbar-chevron {
    margin-left: 24px;
}

/* document area */
.main {
    display: flex;
    height: 799px;
    flex-shrink: 0;
    background-color: #fff;
}
.workspace {
    position: relative;
    width: 1852px;
    padding-left: 84px;
    overflow: hidden;
    background-color: #808080;
}
.page-head {
    display: flex;
    align-items: center;
    justify-content: space-between;
    width: 1684px;
    height: 72px;
    padding: 12px 18px 0 0;
    color: #fff;
    font-size: 16px;
    font-weight: 700;
}
.page-num {
    width: 24px;
}
.page-add {
    margin-left: 18px;
}
.page {
    display: block;
    width: 1684px;
    height: 727px;
}
.wm-text {
    font: 16px "Liberation Sans", sans-serif;
    fill: #eaeaea;
}
.box-shadow {
    fill: #f1f1f1;
}
.frame-dark path {
    fill: none;
    stroke: #444;
    stroke-width: 1.5;
}
.frame-grey path {
    fill: none;
    stroke: #666;
    stroke-width: 1.6;
}
.divider {
    stroke: #444;
    stroke-width: 1.5;
    stroke-dasharray: 10 4;
}
.lifeline path {
    fill: none;
    stroke: #333;
    stroke-width: 1;
    stroke-dasharray: 4 3;
}
.box rect {
    fill: #fff;
    stroke: #555;
    stroke-width: 1.7;
}
.box-label text {
    font: bold 11px "Liberation Sans", sans-serif;
    text-anchor: middle;
    fill: #111;
}
.actor {
    fill: none;
    stroke: #333;
    stroke-width: 1;
}
.actor-label {
    font: 12px "Liberation Sans", sans-serif;
    fill: #111;
}
.user-bar {
    fill: none;
    stroke: #111;
    stroke-width: 2;
}
.msg {
    font: 10.7px "Liberation Sans", sans-serif;
    fill: #222;
}
.msg-b {
    font-weight: bold;
}
.act rect {
    fill: #fff;
    stroke: #555;
    stroke-width: 1.4;
}
.line path {
    fill: none;
    stroke: #555;
    stroke-width: 1.5;
}
.line .line-heavy {
    stroke: #111;
}
.line-dash path {
    stroke: #444;
    stroke-width: 1.1;
    stroke-dasharray: 3 2;
}
.dots {
    fill: #222;
}

/* page controls floating over the document */
.pager {
    position: absolute;
    left: 674px;
    bottom: 47px;
    display: flex;
    align-items: center;
    width: 530px;
    height: 60px;
    border-radius: 30px;
    background-color: rgba(66, 66, 66, 0.96);
    box-shadow: 0 3px 10px rgba(0, 0, 0, 0.25);
    color: #fff;
    font-size: 21px;
    font-weight: 600;
}
.pager-chevron {
    width: 18px;
    height: 12px;
    margin-left: 33px;
    flex-shrink: 0;
}
.pager-box {
    display: flex;
    align-items: center;
    justify-content: center;
    height: 36px;
    border-radius: 6px;
    background-color: #363636;
}
.pager-page {
    width: 53px;
    margin-left: 18px;
}
.pager-total {
    width: 25px;
    margin-left: 7px;
    white-space: nowrap;
}
.pager-down {
    margin-left: 19px;
}
.pager-minus {
    margin-left: 56px;
}
.pager-zoom {
    width: 72px;
    margin-left: 18px;
}
.pager-plus {
    margin-left: 19px;
}
.pager-fit {
    display: flex;
    align-items: center;
    gap: 6px;
    margin-left: 53px;
}
.pager::before,
.pager::after {
    content: "";
    position: absolute;
    top: 0;
    bottom: 0;
    width: 1px;
    background-color: #2e2e2e;
}
.pager::before {
    left: 219px;
}
.pager::after {
    left: 419px;
}
.help {
    position: absolute;
    left: 1770px;
    bottom: 47px;
    width: 60px;
    height: 60px;
    border-radius: 50%;
    background-color: #ff5722;
    color: #fff;
    font: bold 40px/60px "Liberation Sans", sans-serif;
    text-align: center;
}

/* scrollbar */
.scrollbar {
    position: relative;
    display: flex;
    flex-direction: column;
    align-items: center;
    width: 25px;
    background-color: #f1f1f1;
}
.scroll-up {
    margin-top: 10px;
    border: 6px solid transparent;
    border-top: 0;
    border-bottom: 6px solid #a3a3a3;
}
.scroll-thumb {
    width: 21px;
    height: 369px;
    margin-top: 9px;
    background-color: #c1c1c1;
}
.scroll-down {
    margin-top: auto;
    margin-bottom: 10px;
    border: 6px solid transparent;
    border-bottom: 0;
    border-top: 6px solid #505050;
}

/* side tabs */
.side-tabs {
    display: flex;
    flex-direction: column;
    gap: 3px;
    flex: 1;
    padding: 3px 3px 0 4px;
    background-color: #d0d0d0;
}
.side-tab {
    display: flex;
    align-items: center;
    justify-content: flex-start;
    gap: 11px;
    width: 36px;
    padding: 20px 0 0;
    writing-mode: vertical-rl;
    transform: rotate(180deg);
    color: #fff;
    font: bold 21px "Liberation Sans", sans-serif;
}
.side-tab svg {
    transform: rotate(90deg);
    flex-shrink: 0;
}
.side-green {
    height: 305px;
    background-color: #5fbf8f;
}
.side-red {
    height: 261px;
    background-color: #e57373;
}
.side-blue {
    height: 180px;
    background-color: #4aa3f0;
}

/* windows taskbar */
.taskbar {
    display: flex;
    align-items: center;
    height: 72px;
    flex-shrink: 0;
    background-color: #1c1c1c;
    border-top: 2px solid #2b2b2b;
    color: #fff;
}
.weather {
    position: relative;
    width: 40px;
    height: 42px;
    margin-left: 30px;
    align-self: flex-start;
    margin-top: 8px;
}
.badge-red {
    position: absolute;
    top: 0;
    left: 19px;
    width: 21px;
    height: 26px;
    border-radius: 50%;
    background-color: #c42b1c;
    font-size: 16px;
    line-height: 26px;
    text-align: center;
}
.winlogo {
    margin-left: 196px;
}
.search {
    display: flex;
    align-items: center;
    width: 325px;
    height: 44px;
    margin-left: 21px;
    padding-left: 17px;
    border-radius: 22px;
    background-color: #f3f3f3;
    color: #444;
    font-size: 20px;
}
.search span {
    margin-left: 13px;
}
.search-art {
    margin-left: auto;
    margin-right: 4px;
}
.task-icons {
    display: flex;
    margin-left: 6px;
    margin-top: -2px;
}
.task-icon {
    position: relative;
    display: flex;
    align-items: center;
    justify-content: center;
    width: 66px;
    height: 60px;
}
.task-open::after {
    content: "";
    position: absolute;
    bottom: 2px;
    left: 30px;
    width: 6px;
    height: 6px;
    border-radius: 50%;
    background-color: #8a8a8a;
}
.task-active {
    border-radius: 6px;
    background-color: #2d2d2d;
    width: 60px;
    margin: 0 3px;
}
.task-active::after {
    content: "";
    position: absolute;
    bottom: 0;
    left: 18px;
    width: 24px;
    height: 4px;
    border-radius: 2px;
    background-color: #4cc2ff;
}
.badge-pink {
    position: absolute;
    top: 4px;
    left: 32px;
    width: 24px;
    height: 26px;
    border-radius: 50%;
    background-color: #ec407a;
    font-size: 12px;
    line-height: 26px;
    text-align: center;
}
.badge-photo {
    position: absolute;
    top: 4px;
    left: 35px;
    width: 20px;
    height: 26px;
    border-radius: 50%;
    background: radial-gradient(circle at 50% 40%, #c9a08e 30%, #5a3b45 70%);
}
.badge-blue {
    position: absolute;
    top: 2px;
    left: 38px;
    width: 17px;
    height: 22px;
    border-radius: 50%;
    background-color: #4cc2ff;
    color: #111;
    font-size: 13px;
    line-height: 22px;
    text-align: center;
}
.word-w {
    font: bold 15px "Liberation Sans", sans-serif;
    text-anchor: middle;
    fill: #fff;
}
.tray {
    display: flex;
    align-items: center;
    margin-left: auto;
    padding-right: 30px;
}
.tray-cell {
    display: flex;
    align-items: center;
    justify-content: center;
}
.tray-chevron,
.tray-cloud {
    width: 48px;
}
.tray-lang {
    display: block;
    width: 68px;
    margin-right: 4px;
    font-size: 18px;
    line-height: 25px;
    text-align: center;
}
.tray-sys {
    width: 36px;
}
.clock {
    display: flex;
    flex-direction: column;
    align-items: flex-end;
    width: 112px;
    font-size: 17.5px;
    line-height: 25px;
}
.bell {
    margin-left: 12px;
}
```
